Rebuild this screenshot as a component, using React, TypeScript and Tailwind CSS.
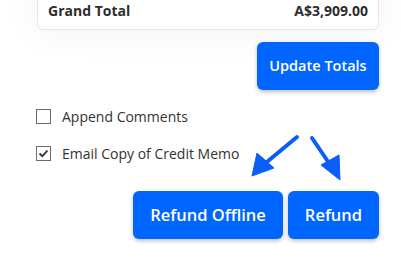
import React from 'react';

const font = { fontFamily: '"Open Sans", "Noto Sans", sans-serif' };

// check box with label
const CheckRow: React.FC<{ label: string; checked?: boolean }> = ({ label, checked }) => (
  <label className="flex items-center gap-[11px] h-5">
    <span className="w-[15px] h-[15px] border border-[#6b6b6b] bg-white flex items-center justify-center">
      {checked && (
        <svg width="11" height="11" viewBox="0 0 11 11">
          <path d="M1.5 5.5 L4.3 8.2 L9.5 2.5" fill="none" stroke="#333" strokeWidth="1.8" />
        </svg>
      )}
    </span>
    <span className="text-[14px] text-[#333]">{label}</span>
  </label>
);

const BlueButton: React.FC<{ children: React.ReactNode; className?: string }> = ({ children, className }) => (
  <button
    className={`h-12 rounded-md bg-[#0066ff] text-white font-semibold shadow-[0_2px_4px_rgba(0,0,0,0.25)] ${className ?? ''}`}
  >
    {children}
  </button>
);

export default function App() {
  return (
    <div className="relative w-[401px] h-[257px] bg-white overflow-hidden" style={font}>
      {/* totals card, top cut off */}
      <div className="ml-[37px] w-[342px] -mt-5 pt-[19px] pb-[8px] px-[10px] bg-white border border-[#e3e5e8] rounded-md shadow-[0_0_40px_rgba(0,0,0,0.06)] flex justify-between text-[14px] font-bold text-[#2d2d2d]">
        <span>Grand Total</span>
        <span>A$3,909.00</span>
      </div>

      <div className="flex justify-end mr-[22px] mt-3">
        <BlueButton className="w-[122px] text-[14.5px]">Update Totals</BlueButton>
      </div>

      <div className="ml-[36px] mt-[16px] flex flex-col gap-[17px]">
        <CheckRow label="Append Comments" />
        <CheckRow label="Email Copy of Credit Memo" checked />
      </div>

      <div className="flex justify-end gap-[5px] mr-[22px] mt-[28px]">
        <BlueButton className="w-[150px] text-[16.5px]">Refund Offline</BlueButton>
        <BlueButton className="w-[91px] text-[16.5px]">Refund</BlueButton>
      </div>

      {/* annotation arrows */}
      <svg className="absolute left-0 top-0 pointer-events-none" width="401" height="257">
        <g fill="#0a5ef5" stroke="#0a5ef5">
          <line x1="297" y1="137" x2="262" y2="166" strokeWidth="4" strokeLinecap="round" />
          <polygon points="252,176 257,153 274,168" strokeWidth="1" strokeLinejoin="round" />
          <line x1="312" y1="138" x2="333" y2="169" strokeWidth="4" strokeLinecap="round" />
          <polygon points="340,180 321,165 339,155" strokeWidth="1" strokeLinejoin="round" />
        </g>
      </svg>
    </div>
  );
}
